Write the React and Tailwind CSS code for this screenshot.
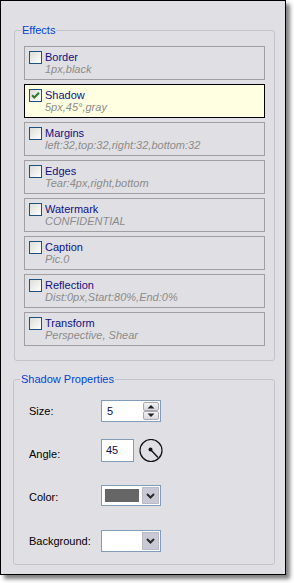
import React from "react";

const items = [
  ["Border", "1px,black", false],
  ["Shadow", "5px,45°,gray", true],
  ["Margins", "left:32,top:32,right:32,bottom:32", false],
  ["Edges", "Tear:4px,right,bottom", false],
  ["Watermark", "CONFIDENTIAL", false],
  ["Caption", "Pic.0", false],
  ["Reflection", "Dist:0px,Start:80%,End:0%", false],
  ["Transform", "Perspective, Shear", false],
];

function Checkbox({ checked }) {
  return (
    <div className="w-[13px] h-[13px] shrink-0 border border-[#1c5180] bg-linear-to-br from-[#dcdcd7] to-white flex items-center justify-center">
      {checked && (
        <svg width="11" height="11" viewBox="0 0 11 11">
          <path d="M2 5.2 L4.3 7.5 L9 2.8" fill="none" stroke="#2a7a2a" strokeWidth="2" />
        </svg>
      )}
    </div>
  );
}

function Item({ title, sub, sel }) {
  return (
    <div
      className={`h-[34px] border flex pl-[4px] pt-[4px] ${
        sel ? "border-black bg-[#ffffe1]" : "border-[#a0a0a4]"
      }`}
    >
      <Checkbox checked={sel} />
      <div className="ml-[3px] leading-[12px]">
        <div className="text-[#10107e]">{title}</div>
        <div className="italic text-[#8c8c8c]">{sub}</div>
      </div>
    </div>
  );
}

function ArrowBtn({ up }) {
  return (
    <div className="h-[10px] w-[16px] border border-[#a9a9b4] rounded-[2px] bg-linear-to-b from-[#f4f4f6] to-[#d8d8de] flex items-center justify-center">
      <svg width="8" height="5" viewBox="0 0 8 5">
        {up ? (
          <path d="M0.5 4.5 L4 1 L7.5 4.5 Z" fill="#222" />
        ) : (
          <path d="M0.5 0.5 L4 4 L7.5 0.5 Z" fill="#222" />
        )}
      </svg>
    </div>
  );
}

function DropBtn() {
  return (
    <div className="w-[17px] h-full border border-[#b9b9c8] bg-[#c9c9d6] flex items-center justify-center">
      <svg width="9" height="6" viewBox="0 0 9 6">
        <path d="M1 1 L4.5 4.5 L8 1" fill="none" stroke="#2a2a2a" strokeWidth="2" />
      </svg>
    </div>
  );
}

export default function App() {
  return (
    <div className="w-[294px] h-[583px] bg-white font-['Liberation_Sans',Arial,sans-serif] text-[11px]">
      <div className="w-[286px] h-[575px] border border-black bg-[#e0dfe3] shadow-[4px_4px_4px_rgba(0,0,0,0.5)] flex flex-col">
        <fieldset className="ml-[13px] mt-[23px] w-[261px] border border-[#c4c3ca] rounded-[3px] px-[9px] pt-[9px] pb-[14px]">
          <legend className="-ml-[3px] px-[1px] leading-[13px] text-[#0046d5]">Effects</legend>
          <div className="flex flex-col gap-[4px]">
            {items.map(([t, s, sel]) => (
              <Item key={t} title={t} sub={s} sel={sel} />
            ))}
          </div>
        </fieldset>

        <fieldset className="ml-[12px] mt-[12px] w-[262px] border border-[#c4c3ca] rounded-[3px] pl-[15px] pt-[14px] pb-[12px]">
          <legend className="-ml-[9px] px-[1px] leading-[13px] text-[#0046d5]">Shadow Properties</legend>

          <div className="flex h-[22px] leading-[13px]">
            <div className="w-[72px] mt-[5px] text-black">Size:</div>
            <div className="w-[60px] h-[22px] border border-[#7f9db9] bg-white flex justify-between pl-[5px] pr-[1px] py-[1px]">
              <span className="mt-[3px] text-[#101040]">5</span>
              <div className="flex flex-col">
                <ArrowBtn up />
                <ArrowBtn />
              </div>
            </div>
          </div>

          <div className="flex h-[23px] mt-[17px] leading-[13px]">
            <div className="w-[72px] mt-[9px] text-black">Angle:</div>
            <div className="w-[33px] h-[23px] border border-[#7f9db9] bg-white pl-[4px] pt-[4px] text-[#101040]">45</div>
            <svg className="ml-[5px]" width="24" height="24" viewBox="0 0 24 24">
              <circle cx="12" cy="11.5" r="11" fill="none" stroke="#111" strokeWidth="1.2" />
              <circle cx="11.5" cy="10.5" r="2" fill="#111" />
              <path d="M11.5 10.5 L19 18.5" stroke="#111" strokeWidth="1.3" />
            </svg>
          </div>

          <div className="flex h-[21px] mt-[23px] leading-[13px]">
            <div className="w-[72px] mt-[6px] text-black">Color:</div>
            <div className="w-[60px] h-[21px] border border-[#7f9db9] bg-white flex p-[1px]">
              <div className="flex-1 border-2 border-white bg-[#666666] mr-[1px]" />
              <DropBtn />
            </div>
          </div>

          <div className="flex h-[22px] mt-[24px] leading-[13px]">
            <div className="w-[72px] mt-[5px] text-black">Background:</div>
            <div className="w-[60px] h-[22px] border border-[#7f9db9] bg-white flex justify-end p-[1px]">
              <DropBtn />
            </div>
          </div>
        </fieldset>
      </div>
    </div>
  );
}
